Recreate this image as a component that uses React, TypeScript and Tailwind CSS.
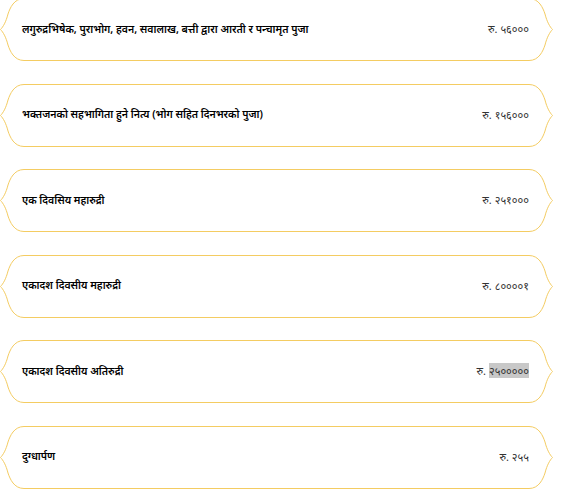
const items = [
  { title: 'लगुरुद्रभिषेक, पुराभोग, हवन, सवालाख, बत्ती द्वारा आरती र पन्चामृत पुजा', price: '५६०००' },
  { title: 'भक्तजनको सहभागिता हुने नित्य (भोग सहित दिनभरको पुजा)', price: '१५६०००' },
  { title: 'एक दिवसिय महारुद्री', price: '२५१०००' },
  { title: 'एकादश दिवसीय महारुद्री', price: '८००००१' },
  { title: 'एकादश दिवसीय अतिरुद्री', price: '२५०००००', selected: true },
  { title: 'दुग्धार्पण', price: '२५५' },
];

const Frame = () => (
  <svg
    className="absolute inset-0 pointer-events-none"
    width="553"
    height="63"
    viewBox="0 0 553 63"
    fill="none"
  >
    <path
      d="M24,0.5 C14,0.5 10,10 8,16 C6,24 3,29 0.5,31.5 C3,34 6,39 8,47 C10,53 14,62.5 24,62.5 L529,62.5 C539,62.5 543,53 545,47 C547,39 550,34 552.5,31.5 C550,29 547,24 545,16 C543,10 539,0.5 529,0.5 Z"
      stroke="#f4cc62"
      strokeWidth="1"
    />
  </svg>
);

const App = () => {
  return (
    <div
      className="min-h-screen bg-white flex flex-col gap-[22.5px] mt-[-2px]"
      style={{ fontFamily: '"Noto Sans", "Liberation Sans", sans-serif' }}
    >
      {items.map((item) => (
        <div key={item.title} className="relative w-[553px] h-[63px]">
          <Frame />
          <div className="relative h-full flex items-center justify-between pl-[22px] pr-[24px]">
            <span className="text-[10.5px] font-semibold text-black">{item.title}</span>
            <span className="text-[11px] text-[#333]">
              रु.{' '}
              <span className={item.selected ? 'bg-[#c8c8c8]' : ''}>{item.price}</span>
            </span>
          </div>
        </div>
      ))}
    </div>
  );
};

export default App;
